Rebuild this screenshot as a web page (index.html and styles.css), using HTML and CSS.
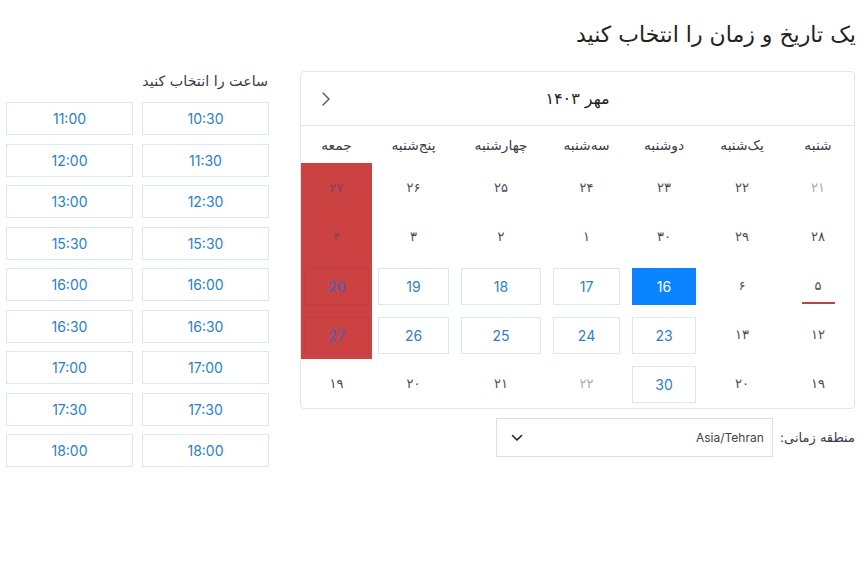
FILE: index.html
```html
<!DOCTYPE html>
<html lang="fa" dir="rtl">
<head>
<meta charset="utf-8">
<title>انتخاب تاریخ و زمان</title>
<link rel="stylesheet" href="styles.css">
</head>
<body>
<div class="page">
  <h1 class="title">یک تاریخ و زمان را انتخاب کنید</h1>
  <div class="main">
    <section class="cal-col">
      <div class="card">
        <div class="card-head">
          <span></span>
          <span class="month">مهر ۱۴۰۳</span>
          <button class="nav" aria-label="next">
            <svg width="10" height="16" viewBox="0 0 10 16"><path d="M2 2 L8 8 L2 14" fill="none" stroke="#555" stroke-width="1.4" stroke-linecap="round" stroke-linejoin="round"/></svg>
          </button>
        </div>
        <div class="grid">
          <div class="wd">شنبه</div>
          <div class="wd">یک‌شنبه</div>
          <div class="wd">دوشنبه</div>
          <div class="wd">سه‌شنبه</div>
          <div class="wd">چهارشنبه</div>
          <div class="wd">پنج‌شنبه</div>
          <div class="wd">جمعه</div>

          <div class="day muted">۲۱</div>
          <div class="day">۲۲</div>
          <div class="day">۲۳</div>
          <div class="day">۲۴</div>
          <div class="day">۲۵</div>
          <div class="day">۲۶</div>
          <div class="day red"><span class="dim">۲۷</span></div>

          <div class="day">۲۸</div>
          <div class="day">۲۹</div>
          <div class="day">۳۰</div>
          <div class="day">۱</div>
          <div class="day">۲</div>
          <div class="day">۳</div>
          <div class="day red"><span class="dim">۴</span></div>

          <div class="day"><span class="today">۵</span></div>
          <div class="day">۶</div>
          <div class="day"><span class="box selected">16</span></div>
          <div class="day"><span class="box">17</span></div>
          <div class="day"><span class="box">18</span></div>
          <div class="day"><span class="box">19</span></div>
          <div class="day red"><span class="box redbox">20</span></div>

          <div class="day">۱۲</div>
          <div class="day">۱۳</div>
          <div class="day"><span class="box">23</span></div>
          <div class="day"><span class="box">24</span></div>
          <div class="day"><span class="box">25</span></div>
          <div class="day"><span class="box">26</span></div>
          <div class="day red"><span class="box redbox">27</span></div>

          <div class="day">۱۹</div>
          <div class="day">۲۰</div>
          <div class="day"><span class="box">30</span></div>
          <div class="day muted">۲۲</div>
          <div class="day">۲۱</div>
          <div class="day">۲۰</div>
          <div class="day">۱۹</div>
        </div>
      </div>
      <div class="tz">
        <label class="tz-label">منطقه زمانی:</label>
        <div class="select">
          <span class="tz-value">Asia/Tehran</span>
          <svg width="12" height="8" viewBox="0 0 12 8"><path d="M1.5 1.5 L6 6 L10.5 1.5" fill="none" stroke="#222" stroke-width="1.6" stroke-linecap="round" stroke-linejoin="round"/></svg>
        </div>
      </div>
    </section>

    <section class="times">
      <div class="times-title">ساعت را انتخاب کنید</div>
      <div class="slots">
        <div class="slot">10:30</div><div class="slot">11:00</div>
        <div class="slot">11:30</div><div class="slot">12:00</div>
        <div class="slot">12:30</div><div class="slot">13:00</div>
        <div class="slot">15:30</div><div class="slot">15:30</div>
        <div class="slot">16:00</div><div class="slot">16:00</div>
        <div class="slot">16:30</div><div class="slot">16:30</div>
        <div class="slot">17:00</div><div class="slot">17:00</div>
        <div class="slot">17:30</div><div class="slot">17:30</div>
        <div class="slot">18:00</div><div class="slot">18:00</div>
      </div>
    </section>
  </div>
</div>
</body>
</html>
```

FILE: styles.css
```css
* { box-sizing: border-box; }
html, body { margin: 0; padding: 0; background: #fff; }
body {
  font-family: "DejaVu Sans", "Noto Sans", sans-serif;
  color: #3d3d48;
  width: 864px;
  height: 577px;
  overflow: hidden;
}
.page {
  padding: 20px 8px 0 6px;
}
.title {
  margin: 0;
  font-size: 22px;
  font-weight: normal;
  line-height: 30px;
  color: #222;
  text-align: right;
}
.main {
  display: flex;
  flex-direction: row;
  gap: 31px;
  margin-top: 21px;
  padding-right: 1px;
}
.cal-col {
  width: 556px;
  display: flex;
  flex-direction: column;
}
.card {
  border: 1px solid #e3e5e8;
  border-radius: 4px;
  overflow: hidden;
}
.card-head {
  height: 54px;
  border-bottom: 1px solid #e3e5e8;
  display: grid;
  grid-template-columns: 1fr auto 1fr;
  align-items: center;
}
.month {
  font-size: 16px;
  color: #222;
}
.nav {
  justify-self: end;
  margin-left: 20px;
  background: none;
  border: 0;
  padding: 0;
  display: flex;
  align-items: center;
}
.grid {
  display: grid;
  grid-template-columns: 72px 80px 76px 79px 92px 83px 1fr;
  grid-template-rows: 37px repeat(5, 49px);
}
.wd {
  display: flex;
  align-items: center;
  justify-content: center;
  font-size: 13.8px;
  color: #3a3a48;
}
.day {
  display: flex;
  align-items: center;
  justify-content: center;
  font-size: 13px;
  color: #4a4a58;
}
.day.muted { color: #a8a8b0; }
.day.red { background: #cc4141; }
.dim { color: #7e4658; }
.today {
  position: relative;
  display: inline-block;
  width: 33px;
  text-align: center;
}
.today::after {
  content: "";
  position: absolute;
  left: 0;
  right: 0;
  bottom: -11px;
  height: 2px;
  background: #b4454e;
}
.box {
  width: calc(100% - 12px);
  height: 37px;
  margin-top: 1px;
  border: 1px solid #d9e7f0;
  display: flex;
  align-items: center;
  justify-content: center;
  font-family: "Inter", "DejaVu Sans", sans-serif;
  font-size: 14px;
  color: #2a7fc9;
  background: #fff;
}
.box.selected {
  background: #0a84ff;
  border-color: #0a84ff;
  color: #fff;
}
.box.redbox {
  width: calc(100% - 6px);
  background: transparent;
  border-color: #c23e44;
  color: #5d5ea6;
  font-weight: 600;
}
.tz {
  display: flex;
  flex-direction: row;
  align-items: center;
  gap: 7px;
  margin-top: 9px;
}
.tz-label {
  font-size: 13px;
  color: #3a3a48;
}
.select {
  width: 277px;
  height: 39px;
  border: 1px solid #dcdfe3;
  display: flex;
  align-items: center;
  justify-content: space-between;
  padding: 0 8px 0 14px;
}
.tz-value {
  font-family: "Inter", "DejaVu Sans", sans-serif;
  font-size: 12px;
  color: #444;
}
.times {
  width: 263px;
}
.times-title {
  font-size: 14.3px;
  line-height: 20px;
  color: #3a3a48;
  text-align: right;
  padding-right: 1px;
}
.slots {
  margin-top: 11px;
  display: grid;
  grid-template-columns: 127px 127px;
  column-gap: 9px;
  row-gap: 8.5px;
}
.slot {
  height: 33px;
  border: 1px solid #d9e7f0;
  display: flex;
  align-items: center;
  justify-content: center;
  font-family: "Inter", "DejaVu Sans", sans-serif;
  font-size: 14px;
  color: #2a7fc9;
}
```
